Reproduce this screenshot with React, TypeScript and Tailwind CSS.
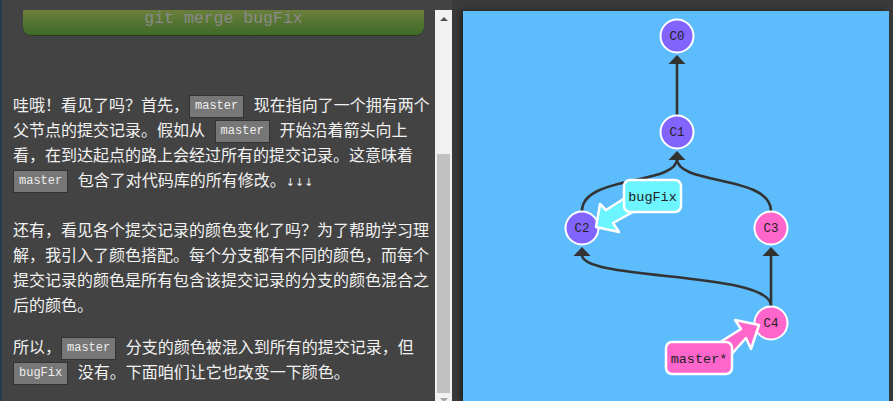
const Code = ({ children }: { children: string }) => (
  <code className="-my-[2px] inline-block border border-[#333] bg-[#777] px-[5px] py-[3px] align-middle font-['Liberation_Mono',monospace] text-[12px] leading-[15px] text-[#eee] [word-spacing:0]">
    {children}
  </code>
);

const Scrollbar = () => (
  <div className="mt-[10px] flex w-[17px] shrink-0 flex-col bg-[#f1f1f1]">
    <div className="flex h-[17px] shrink-0 items-center justify-center">
      <div className="h-0 w-0 border-x-[4px] border-b-[4px] border-x-transparent border-b-[#505050]" />
    </div>
    <div className="mx-[2px] mt-[127px] h-[239px] shrink-0 bg-[#c1c1c1]" />
    <div className="flex h-[17px] shrink-0 justify-center pt-[5px]">
      <div className="h-0 w-0 border-x-[4px] border-t-[4px] border-x-transparent border-t-[#a3a3a3]" />
    </div>
  </div>
);

const nodes = [
  { id: 'C0', x: 677, y: 36, fill: '#8264ff' },
  { id: 'C1', x: 677, y: 132, fill: '#8264ff' },
  { id: 'C2', x: 582, y: 228, fill: '#8264ff' },
  { id: 'C3', x: 771, y: 228, fill: '#ff66cc' },
  { id: 'C4', x: 771, y: 323, fill: '#ff66cc' },
];

// arrow heads sit right under each parent
const heads = [
  [677, 55],
  [677, 151],
  [582, 247],
  [771, 247],
];

const Graph = () => (
  <svg width="426" height="390" viewBox="463 11 426 390" className="block">
    <g stroke="#333" strokeWidth="2.6" fill="none">
      <line x1="677" y1="63" x2="677" y2="115" />
      <path d="M677,159 C677,185 582,175 582,211" />
      <path d="M677,159 C677,185 771,175 771,211" />
      <path d="M582,255 C582,281 771,271 771,306" />
      <line x1="771" y1="255" x2="771" y2="306" />
    </g>
    {heads.map(([x, y]) => (
      <polygon key={`${x}-${y}`} points={`${x},${y} ${x - 8.5},${y + 9} ${x + 8.5},${y + 9}`} fill="#333" />
    ))}
    {nodes.map((n) => (
      <g key={n.id}>
        <circle cx={n.x} cy={n.y} r="16.5" fill={n.fill} stroke="#fff" strokeWidth="2" />
        <text
          x={n.x}
          y={n.y + 1}
          textAnchor="middle"
          dominantBaseline="middle"
          fontFamily="Liberation Mono, monospace"
          fontSize="12.5"
          fill="#222">
          {n.id}
        </text>
      </g>
    ))}

    {/* bugFix label */}
    <polygon
      points="596,227 600,204 606,210 625,198 633,212 613,223 619,232"
      fill="#6cf4ff"
      stroke="#fff"
      strokeWidth="2.5"
      strokeLinejoin="round"
    />
    <rect x="624" y="180" width="57" height="32" rx="6" fill="#6cf4ff" stroke="#fff" strokeWidth="2.5" />
    <text
      x="652.5"
      y="197"
      textAnchor="middle"
      dominantBaseline="middle"
      fontFamily="Liberation Mono, monospace"
      fontSize="13.5"
      fill="#222">
      bugFix
    </text>

    {/* master* label */}
    <polygon
      points="759,325 735,320 741,329 717,344 729,357 746,338 751,349"
      fill="#ff66cc"
      stroke="#fff"
      strokeWidth="2.5"
      strokeLinejoin="round"
    />
    <rect x="666" y="342" width="66" height="32" rx="6" fill="#ff66cc" stroke="#fff" strokeWidth="2.5" />
    <text
      x="699"
      y="359"
      textAnchor="middle"
      dominantBaseline="middle"
      fontFamily="Liberation Mono, monospace"
      fontSize="13.5"
      fill="#222">
      master*
    </text>
  </svg>
);

const App = () => {
  return (
    <div className="flex h-[401px] w-[893px] overflow-hidden bg-[#3a3a3a] font-['Noto_Sans_CJK_SC',sans-serif]">
      <div className="flex w-[452px] shrink-0 bg-[#434343]">
        <div className="w-[2px] shrink-0 bg-[#223b4d]" />
        <div className="w-[433px] shrink-0 pl-[11px] pr-[3px] pt-[10px]">
          <div className="ml-[10px] mr-[8px] h-[25px] rounded-b-[8px] bg-linear-to-b from-[#6b7f3b] to-[#3e6a28] text-center font-['Liberation_Mono',monospace] text-[16.5px] leading-[17px] text-[#8a8a8a] shadow-[0_1px_0_#2a3a1e]">
            git merge bugFix
          </div>
          <div className="mt-[57px] text-[16px] leading-[25px] text-[#f2f2f2] [word-spacing:6px]">
            <p>
              哇哦！看见了吗？首先，<Code>master</Code> 现在指向了一个拥有两个父节点的提交记录。假如从{' '}
              <Code>master</Code> 开始沿着箭头向上看，在到达起点的路上会经过所有的提交记录。这意味着{' '}
              <Code>master</Code> 包含了对代码库的所有修改。
              <span className="font-['DejaVu_Sans',sans-serif] text-[11px]">↓↓↓</span>
            </p>
            <p className="mt-[22px]">
              还有，看见各个提交记录的颜色变化了吗？为了帮助学习理解，我引入了颜色搭配。每个分支都有不同的颜色，而每个提交记录的颜色是所有包含该提交记录的分支的颜色混合之后的颜色。
            </p>
            <p className="mt-[17px]">
              所以，<Code>master</Code> 分支的颜色被混入到所有的提交记录，但 <Code>bugFix</Code>{' '}
              没有。下面咱们让它也改变一下颜色。
            </p>
          </div>
        </div>
        <Scrollbar />
      </div>
      <div className="ml-[11px] mr-[4px] mt-[11px] h-[390px] w-[426px] shrink-0 bg-[#5cbcfc] shadow-[-3px_0_6px_rgba(0,0,0,0.45)]">
        <Graph />
      </div>
    </div>
  );
};

export default App;
